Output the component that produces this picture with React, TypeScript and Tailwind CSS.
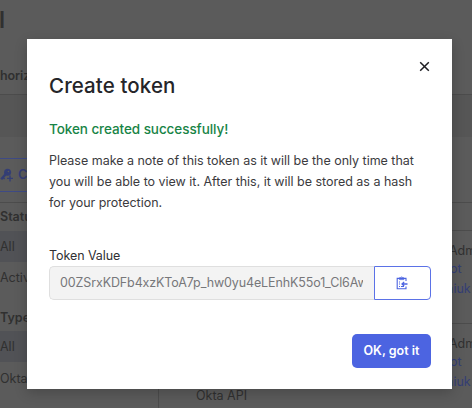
import React from "react";

function KeyPlus() {
  return (
    <svg className="size-[14px] shrink-0" viewBox="0 0 14 14" fill="none" stroke="currentColor">
      <circle cx="7.6" cy="4.2" r="3.5" fill="currentColor" stroke="none" />
      <circle cx="8.4" cy="3.5" r=".8" fill="#5b5b5b" stroke="none" />
      <path d="M6.2 5.6 1.2 11.2" strokeWidth="2.4" />
      <path d="M2.8 9.2 4.6 11" strokeWidth="1.5" />
      <path d="M10 7.4v6M7 10.4h6" strokeWidth="1.4" />
    </svg>
  );
}

function ClipboardIcon() {
  return (
    <svg className="h-3.5 w-3" viewBox="0 0 12 14" fill="none" stroke="#4c64e1">
      <path d="M10 5V2.4H1.2v10.4H10V10.6" strokeWidth="1.1" />
      <path d="M3.4 1.8h1.2L5.6.7l1 1.1h1.2v1.8H3.4z" fill="#4c64e1" fillOpacity=".35" strokeWidth=".8" />
      <path d="M3 6h1M3 8h1M3 10.5h1M5 10.5h3" strokeWidth="1" />
      <path d="M11.5 8H6M8.2 5.9 6 8l2.2 2.1" strokeWidth="1.3" />
    </svg>
  );
}

function TableRow() {
  return (
    <div className="h-[93px] border-t border-[#4c4c4c] pl-[290px] pt-[9px] text-[12.5px] text-[#303030]">
      <div className="h-[19px] leading-[22px]">Adm</div>
      <div className="h-[19px] pl-px leading-[20px] text-[#343e75]">ot</div>
      <div className="-ml-[3px] h-[22px] leading-[22px] text-[#343e75]">niuk</div>
    </div>
  );
}

export default function App() {
  return (
    <div className="relative h-[408px] w-[472px] overflow-hidden bg-[#5b5b5b] font-['Inter',sans-serif] text-[#303030]">
      <div className="flex h-full flex-col">
        <div className="-ml-px h-[66px] pt-[5px] text-[23px] font-semibold leading-[30px]">l</div>
        <div className="h-[28px] text-[12.5px] font-semibold leading-[20px] tracking-[-.1px]">horiz</div>
        <div className="h-[43px] shrink-0 border-t border-[#4c4c4c] bg-[#565656]" />
        <div className="h-[66px] shrink-0 border-b border-[#4c4c4c] pt-[21px]">
          <div className="flex h-[34px] w-[100px] items-center gap-[4px] border-y border-[#3e4a85] text-[13px] font-semibold text-[#343e75]">
            <KeyPlus />Create
          </div>
        </div>
        <div className="flex h-[205px] shrink-0">
          <div className="w-[159px] shrink-0 overflow-hidden border-r border-[#4c4c4c] text-[12.5px]">
            <div className="h-[28px] pt-[3px] font-semibold leading-[22px]">Status</div>
            <div className="h-[31px] bg-[#515256] leading-[31px]">All</div>
            <div className="h-[31px] leading-[32px]">Active</div>
            <div className="h-[38px] pt-[15px] font-semibold leading-[20px]">Type</div>
            <div className="h-[31px] bg-[#515256] leading-[32px]">All</div>
            <div className="h-[32px] leading-[34px]">Okta API</div>
          </div>
          <div className="relative flex-1 pt-[27px]">
            <TableRow />
            <TableRow />
            <div className="absolute left-[37px] top-[183px] whitespace-nowrap text-[12.5px] leading-[20px]">Okta API</div>
          </div>
        </div>
      </div>

      <section className="absolute left-[27px] top-[39px] h-[350px] w-[425px] bg-white px-[22px] shadow-[0_4px_12px_rgba(0,0,0,.2)]">
        <div className="flex h-[80px] justify-between">
          <h1 className="pt-[33px] text-[20.5px] font-medium leading-[28px] tracking-[.1px] text-[#252529]">Create token</h1>
          <svg className="mt-[22px] size-[11px]" viewBox="0 0 11 11" fill="none" stroke="#1d1d21" strokeWidth="1.5"><path d="m1.2 1.2 8.6 8.6m0-8.6L1.2 9.8" /></svg>
        </div>
        <h2 className="h-[30px] text-[13.5px] font-medium leading-[20px] tracking-[-.07px] text-[#188446]">Token created successfully!</h2>
        <p className="h-[97px] whitespace-nowrap pt-px text-[12.5px] leading-[21px] tracking-[-.02px] text-[#3b3b3e]">
          Please make a note of this token as it will be the only time that<br />
          you will be able to view it. After this, it will be stored as a hash<br />
          for your protection.
        </p>
        <label className="block h-[20px] text-[12.5px] leading-[20px] tracking-[-.07px] text-[#303034]">Token Value</label>
        <div className="flex h-[34px] w-[382px]">
          <div className="w-[325px] rounded-l-[5px] border border-r-0 border-[#dfdfdf] bg-[#f3f3f3] pl-[10px] pr-[11px]">
            <div className="overflow-hidden whitespace-nowrap text-[12.5px] leading-[32px] tracking-[-.12px] text-[#77777a]">00ZSrxKDFb4xzKToA7p_hw0yu4eLEnhK55o1_Cl6Aw</div>
          </div>
          <button className="flex flex-1 items-center justify-center rounded-r-[4px] border border-[#5b72e7] pr-px"><ClipboardIcon /></button>
        </div>
        <div className="flex w-[382px] justify-end pt-[34px]">
          <button className="h-[34px] w-[79px] rounded-[5px] bg-[#4c64e1] text-[12.5px] font-semibold text-white">OK, got it</button>
        </div>
      </section>
    </div>
  );
}
